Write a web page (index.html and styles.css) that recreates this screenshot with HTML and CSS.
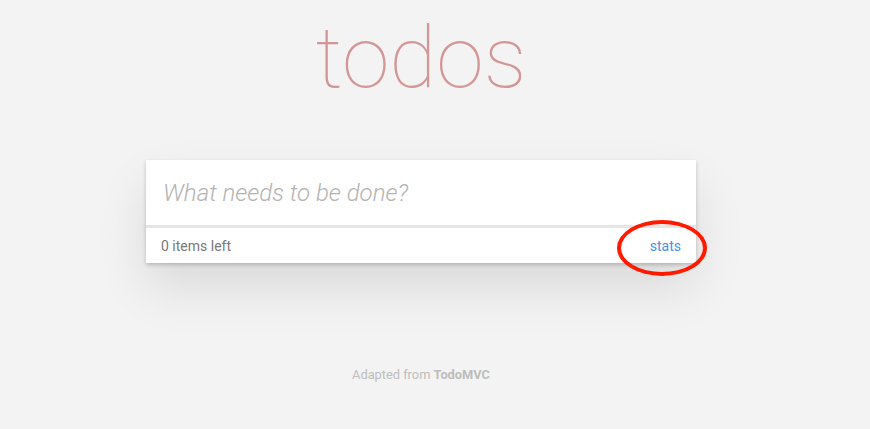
FILE: index.html
```html
<!DOCTYPE html>
<html>
<head>
<meta charset="utf-8">
<link rel="stylesheet" href="styles.css">
</head>
<body>
<div class="page">
  <h1 class="title">todos</h1>
  <section class="app">
    <div class="new-todo">What needs to be done?</div>
    <footer class="footer">
      <span class="count">0 items left</span>
      <span class="stats-wrap">
        <a class="stats">stats</a>
        <span class="ring"></span>
      </span>
    </footer>
  </section>
  <p class="info">Adapted from <strong>TodoMVC</strong></p>
</div>
</body>
</html>
```
FILE: styles.css
```css
html, body {
  margin: 0;
  padding: 0;
  background: #f3f3f3;
  font-family: Roboto, "Liberation Sans", sans-serif;
}
.page {
  width: 842px;
  display: flex;
  flex-direction: column;
  align-items: center;
}
.title {
  margin: 0;
  height: 160px;
  box-sizing: border-box;
  padding-top: 8px;
  font-family: Roboto, sans-serif;
  font-weight: 100;
  font-size: 86px;
  line-height: 100px;
  color: #d39696;
}
.app {
  width: 550px;
  background: #fff;
  box-shadow: 0 2px 4px rgba(0,0,0,0.2), 0 25px 50px rgba(0,0,0,0.1);
}
.new-todo {
  height: 68px;
  box-sizing: border-box;
  padding: 0 17px;
  display: flex;
  align-items: center;
  font-size: 24px;
  font-style: italic;
  font-weight: 300;
  color: #b3b3b3;
  border-bottom: 3px solid #e6e6e6;
}
.footer {
  height: 35px;
  box-sizing: border-box;
  padding: 0 15px;
  display: flex;
  align-items: center;
  justify-content: space-between;
  font-size: 14px;
  color: #777;
}
.stats-wrap {
  position: relative;
}
.stats {
  color: #4a8fe7;
}
.ring {
  position: absolute;
  left: -33px;
  top: -18px;
  width: 82px;
  height: 48px;
  border: 4px solid #ff1a00;
  border-radius: 50%;
}
.info {
  margin: 104px 0 0 0;
  font-size: 12.8px;
  color: #bdbdbd;
}
.info strong {
  font-weight: 700;
}
```
